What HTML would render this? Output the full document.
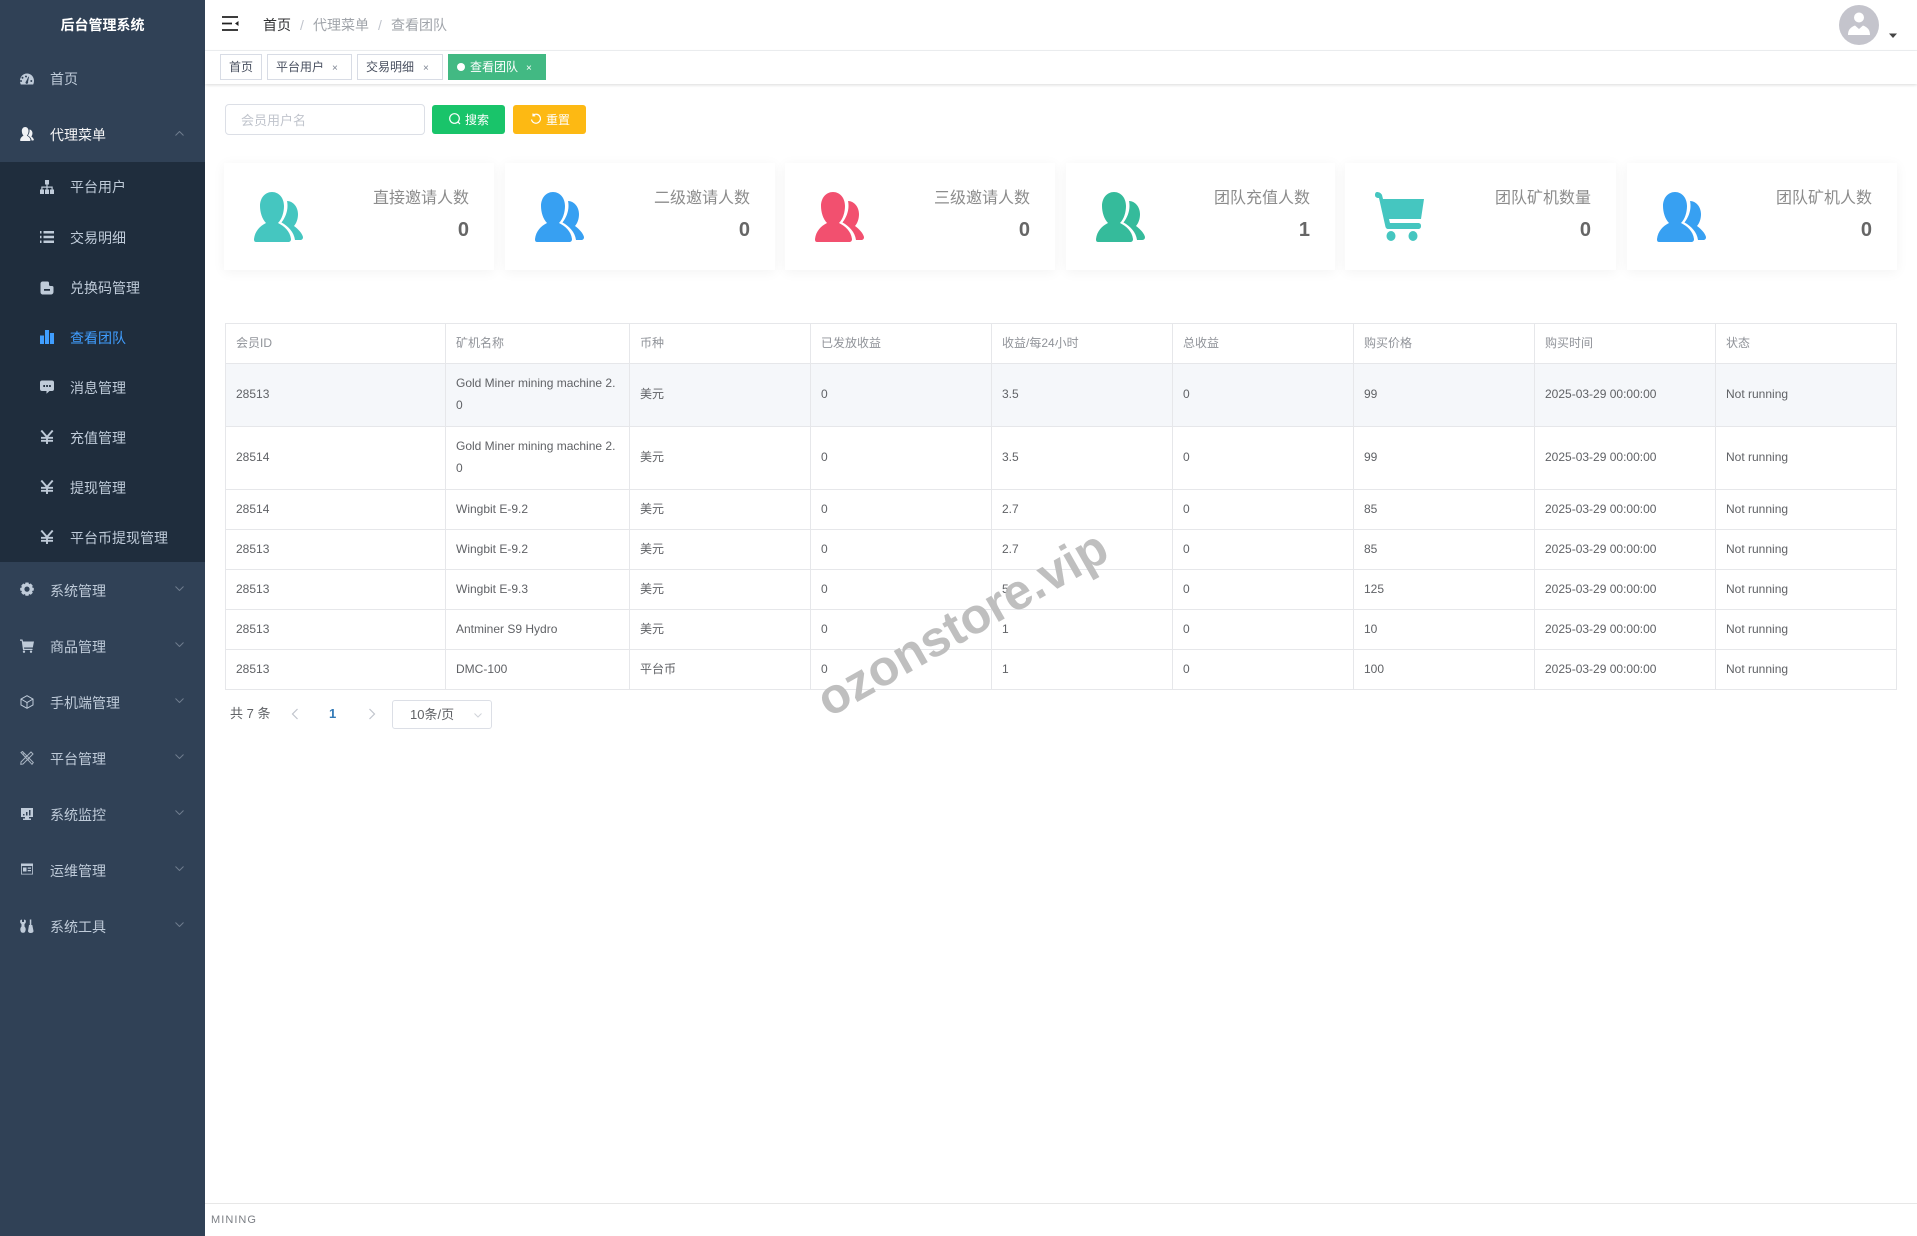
<!DOCTYPE html>
<html lang="zh-CN">
<head>
<meta charset="utf-8">
<title>查看团队</title>
<style>
*{box-sizing:border-box}
html,body{margin:0;padding:0;width:1917px;height:1236px;overflow:hidden;background:#fff;font-family:"Liberation Sans","Noto Sans CJK SC",sans-serif;color:#606266}
#side{position:absolute;left:0;top:0;width:205px;height:1236px;background:#304156}
#sub{position:absolute;left:0;top:162px;width:205px;height:400px;background:#1f2d3d}
.title{position:absolute;left:0;top:15px;width:205px;text-align:center;color:#fff;font-weight:700;font-size:14px;line-height:20px}
.m{position:absolute;left:0;width:205px;height:20px;font-size:14px;line-height:20px;color:#bfcbd9}
.m span{position:absolute;left:50px;top:0;white-space:nowrap}
.m.s span{left:70px}
.m svg.i{position:absolute;left:20px;top:2px;width:14px;height:14px;fill:#bfcbd9}
.m.s svg.i{left:40px}
.m svg.c{position:absolute;left:175px;top:5px;width:9px;height:5px;fill:none;stroke:#6f7d8e;stroke-width:1}
#head{position:absolute;left:205px;top:0;width:1712px;height:51px;background:#fff;border-bottom:1px solid #f0f2f4}
#tags{position:absolute;left:205px;top:51px;width:1712px;height:33px;background:#fff;box-shadow:0 1px 3px rgba(0,0,0,.15)}
.bc{position:absolute;top:15px;font-size:14px;line-height:20px;color:#a0a4aa;white-space:nowrap}
.tag{position:absolute;top:54px;height:26px;border:1px solid #d8dce5;background:#fff;font-size:12px;line-height:25px;color:#495060;white-space:nowrap}
.tag b{position:absolute;top:1px;font-weight:400;font-size:10px;color:#7a8290}
.tag.on{background:#42b983;border-color:#42b983;color:#fff}
.tag.on b{color:#fff}
#ipt{position:absolute;left:225px;top:104px;width:200px;height:31px;border:1px solid #dcdfe6;border-radius:4px;background:#fff;font-size:13px;line-height:31px;color:#c0c4cc;padding-left:15px}
.btn{position:absolute;top:105px;height:29px;width:73px;border-radius:3px;color:#fff;font-size:12px;line-height:29px}
.btn span{position:absolute;left:33px;top:1px}
.btn svg{position:absolute;left:17px;top:8px;width:12px;height:12px;fill:none;stroke:#fff;stroke-width:1.2}
.card{position:absolute;top:163px;height:107px;background:#fff;box-shadow:0 2px 12px rgba(0,0,0,.05)}
.card svg{position:absolute;left:30px;top:29px;width:49px;height:50px}
.card .l{position:absolute;right:25px;top:23px;font-size:16px;line-height:26px;color:#8c8c8c;white-space:nowrap}
.card .v{position:absolute;right:25px;top:55px;font-size:20px;line-height:24px;font-weight:700;color:#666}
table{position:absolute;left:225px;top:323px;width:1671px;table-layout:fixed;border-collapse:collapse;font-size:12px;color:#606266}
td,th{border:1px solid #e6e7ea;padding:0 10px;text-align:left;font-weight:400;line-height:23px;overflow:hidden;vertical-align:middle}
th{color:#909399}
tr.g td{background:#f5f7fa}
tr.w td{padding-bottom:2px;line-height:22px}
.pg{position:absolute;font-size:13px;line-height:20px;white-space:nowrap}
#sel{position:absolute;left:392px;top:700px;width:100px;height:29px;border:1px solid #dcdfe6;border-radius:3px;font-size:13px;line-height:27px;color:#606266;padding-left:17px}
#foot{position:absolute;left:205px;top:1203px;width:1712px;height:33px;background:#fff;border-top:1px solid #e7e7e7}
#foot span{position:absolute;left:6px;top:8px;font-size:11px;line-height:16px;letter-spacing:1.05px;color:#7c7f85}
#wm{position:absolute;left:0;top:0;pointer-events:none}
</style>
</head>
<body>
<svg width="0" height="0" style="position:absolute">
<defs>
<symbol id="ppl" viewBox="0 0 49 50">
<path d="M2 50C0 50 0 48 0 47C1 39 6 34 12 31C8 27 6 20 6 14C6 6 11 0 18 0C25 0 30 6 30 14C30 20 28 27 24 31C30 34 36 39 37 47C37 49 36 50 34 50Z"/>
<path d="M33 9C39 9 44 15 44 22C44 27 42.500 31 40 34C44 37 48 41 49 45C49 47 48 48 46 48L41 48C40 40 34 34 27.500 30.500C31 26 33.500 20 33.500 14C33.500 12 33.300 10 33 9Z"/>
</symbol>
<symbol id="chd" viewBox="0 0 9 5"><path d="M.5.5L4.500 4.500L8.500.5"/></symbol>
<symbol id="chu" viewBox="0 0 9 5"><path d="M.5 4.500L4.500.5L8.500 4.500"/></symbol>
<symbol id="yen" viewBox="0 0 14 14"><path d="M1.300.5L7 7L12.700.5M7 7V14M1 7.800H13M1 10.800H13" fill="none" stroke="#bfcbd9" stroke-width="1.900"/></symbol>
</defs>
</svg>

<div id="side">
<div class="title">后台管理系统</div>
<div class="m" style="top:69px"><svg class="i" viewBox="0 0 14 14" style="top:3px"><path d="M7 1.500C3 1.500 0 4.800 0 8.800C0 10.300.3 11.300.8 12.500L13.200 12.500C13.700 11.300 14 10.300 14 8.800C14 4.800 11 1.500 7 1.500ZM6 9.500L8.500 4.500L9 5L8 10A1.300 1.300 0 1 1 6 9.500ZM2 9A1 1 0 1 1 2 8.900ZM3.500 5.800A1 1 0 1 1 3.500 5.700ZM7 4.500A1 1 0 1 1 7 4.400ZM12.300 9A1 1 0 1 1 12.300 8.900Z" fill-rule="evenodd"/></svg><span>首页</span></div>
<div class="m" style="top:125px"><svg class="i" style="fill:#f0f2f5;top:2px"><use href="#ppl"/></svg><span style="color:#f4f4f5">代理菜单</span><svg class="c" style="top:6px"><use href="#chu"/></svg></div>

<div id="sub"></div>
<div class="m s" style="top:177px"><svg class="i" viewBox="0 0 14 14" style="top:3px"><path d="M5 0H9V4.500H7.600V6.500H12.700V9.500H14V14H10V9.500H11.500V7.700H7.600V9.500H9V14H5V9.500H6.400V7.700H2.500V9.500H4V14H0V9.500H1.300V6.500H6.400V4.500H5Z"/></svg><span>平台用户</span></div>
<div class="m s" style="top:228px"><svg class="i" viewBox="0 0 14 14"><path d="M0 1H1.500V3.500H0ZM3.500 1H14V3.500H3.500ZM0 5.800H1.500V8.300H0ZM3.500 5.800H14V8.300H3.500ZM0 10.500H1.500V13H0ZM3.500 10.500H14V13H3.500Z"/></svg><span>交易明细</span></div>
<div class="m s" style="top:278px"><svg class="i" viewBox="0 0 14 14" style="top:3px"><path d="M2.500.5H7.500C8.500.5 9 1 9 2V3.500C9 4.500 9.500 5 10.500 5H12C13 5 13.500 5.500 13.500 6.500V10.500C13.500 12.500 12.500 13.500 10.500 13.500H3C1.500 13.500.5 12.500.5 11V2.500C.5 1.500 1.500.5 2.500.5ZM4 8V9.800H10V8Z" fill-rule="evenodd"/></svg><span>兑换码管理</span></div>
<div class="m s" style="top:328px"><svg class="i" viewBox="0 0 14 14" style="fill:#409eff;top:2px"><path d="M0 5.500H4V14H0ZM5 0H9V14H5ZM10 3H14V14H10Z"/></svg><span style="color:#409eff">查看团队</span></div>
<div class="m s" style="top:378px"><svg class="i" viewBox="0 0 14 14" style="top:2px"><path d="M2 .5H12C13.300.5 14 1.300 14 2.500V9C14 10.200 13.300 11 12 11H9.500L6.500 13.800V11H2C.8 11 0 10.200 0 9V2.500C0 1.300.8.500 2 .5ZM3.300 5V7H5V5ZM6.200 5V7H7.900V5ZM9.100 5V7H10.800V5Z" fill-rule="evenodd"/></svg><span>消息管理</span></div>
<div class="m s" style="top:428px"><svg class="i" style="top:2px"><use href="#yen"/></svg><span>充值管理</span></div>
<div class="m s" style="top:478px"><svg class="i" style="top:2px"><use href="#yen"/></svg><span>提现管理</span></div>
<div class="m s" style="top:528px"><svg class="i" style="top:2px"><use href="#yen"/></svg><span>平台币提现管理</span></div>

<div class="m" style="top:581px"><svg class="i" viewBox="0 0 14 14" style="top:1px"><path d="M5.500.5H8.500L9 2.300L10.800 1.500L12.800 3.700L12 5.300L13.800 6V8.500L12 9L12.800 10.800L10.800 12.800L9 12L8.500 13.800H5.500L5 12L3.200 12.800L1.200 10.800L2 9L.2 8.500V6L2 5.300L1.200 3.700L3.200 1.500L5 2.300ZM7 4.500A2.600 2.600 0 1 0 7 9.700A2.600 2.600 0 1 0 7 4.500Z" fill-rule="evenodd"/></svg><span>系统管理</span><svg class="c" style="top:5px"><use href="#chd"/></svg></div>
<div class="m" style="top:637px"><svg class="i" viewBox="0 0 14 14" style="top:2px"><path d="M0 .5H2.500L3 2.500H14L12.800 8.500H4L4.200 9.800H12.500V11H3L1.700 1.700H0ZM4 11.500A1.200 1.200 0 1 1 4 13.900A1.200 1.200 0 1 1 4 11.500ZM11 11.500A1.200 1.200 0 1 1 11 13.900A1.200 1.200 0 1 1 11 11.500Z"/></svg><span>商品管理</span><svg class="c"><use href="#chd"/></svg></div>
<div class="m" style="top:693px"><svg class="i" viewBox="0 0 14 14" style="fill:none;stroke:#bfcbd9;stroke-width:1;top:2px"><path d="M7 .7L13 4V10L7 13.300L1 10V4ZM1 4L7 7.500L13 4M7 7.500V13.300"/></svg><span>手机端管理</span><svg class="c"><use href="#chd"/></svg></div>
<div class="m" style="top:749px"><svg class="i" viewBox="0 0 14 14" style="fill:none;stroke:#a9b5c3;stroke-width:1;top:2px"><path d="M1 11L11 1L13 3L3 13L.8 13.300ZM1 1.500L2.500.5L13.300 11.500L12 13.300ZM3 3.500L4.500 2M5.500 6L7 4.500M8 8.500L9.500 7"/></svg><span>平台管理</span><svg class="c"><use href="#chd"/></svg></div>
<div class="m" style="top:805px"><svg class="i" viewBox="0 0 14 14" style="top:2px"><path d="M1 1H13V10H9V11.500H11V13H3V11.500H5V10H1ZM3 7V8.500H4.500V7ZM6 5V8.500H7.500V5ZM9 3V8.500H10.500V3Z" fill-rule="evenodd"/></svg><span>系统监控</span><svg class="c"><use href="#chd"/></svg></div>
<div class="m" style="top:861px"><svg class="i" viewBox="0 0 14 14" style="top:1px"><path d="M1 1.500H13V12.500H1ZM1.800 4V11.700H12.200V4ZM3 5.500H6.500V9.500H3ZM7.700 5.500H11V6.700H7.700ZM7.700 8H11V9.300H7.700Z" fill-rule="evenodd"/></svg><span>运维管理</span><svg class="c"><use href="#chd"/></svg></div>
<div class="m" style="top:917px"><svg class="i" viewBox="0 0 14 14" style="top:2px"><path d="M.5 1L2 .5V3H4V.5L5.500 1C6.200 2.500 6 4 4.500 5V7.500C6 9 6 11 5 13C4 14 2 14 1 13C0 11 0 9 1.500 7.500V5C0 4 -.2 2.500.5 1ZM9.800.5H11.300V6H12.300L13.500 12C13.500 13.500 12 14 10.500 14C9 14 8 13 8 12L9 6H9.800Z"/></svg><span>系统工具</span><svg class="c"><use href="#chd"/></svg></div>
</div>

<div id="head">
<svg style="position:absolute;left:17px;top:16px" width="17" height="15" viewBox="0 0 17 15"><path d="M0 1H16M0 7.500H10M0 14H16" stroke="#222" stroke-width="1.800" fill="none"/><path d="M16.500 5V10L13 7.500Z" fill="#222"/></svg>
<div class="bc" style="left:58px;color:#303133">首页</div>
<div class="bc" style="left:95px;color:#c0c4cc">/</div>
<div class="bc" style="left:108px">代理菜单</div>
<div class="bc" style="left:173px;color:#c0c4cc">/</div>
<div class="bc" style="left:186px">查看团队</div>
<svg style="position:absolute;left:1634px;top:5px" width="40" height="40" viewBox="0 0 40 40"><circle cx="20" cy="20" r="20" fill="#c4c4cc"/><circle cx="20" cy="12.500" r="5" fill="#fff"/><path d="M9 30C9 25 11 22.500 16 20.500L20 24L24 20.500C29 22.500 31 25 31 30Z" fill="#fff"/></svg>
<svg style="position:absolute;left:1684px;top:33px" width="9" height="6" viewBox="0 0 9 6"><path d="M0 .5H8L4 5Z" fill="#444"/></svg>
</div>
<div id="tags"></div>
<div class="tag" style="left:220px;width:42px;padding-left:8px">首页</div>
<div class="tag" style="left:267px;width:85px;padding-left:8px">平台用户<b style="left:64px">×</b></div>
<div class="tag" style="left:357px;width:86px;padding-left:8px">交易明细<b style="left:65px">×</b></div>
<div class="tag on" style="left:448px;width:98px;padding-left:21px"><i style="position:absolute;left:8px;top:8px;width:8px;height:8px;border-radius:50%;background:#fff"></i>查看团队<b style="left:77px">×</b></div>

<div id="ipt">会员用户名</div>
<div class="btn" style="left:432px;background:#19c46a"><svg viewBox="0 0 12 12"><circle cx="5.500" cy="5.500" r="4.800"/><path d="M9 9L11 11"/></svg><span>搜索</span></div>
<div class="btn" style="left:513px;background:#fdb913"><svg viewBox="0 0 12 12"><path d="M3 2.300A4.500 4.500 0 1 1 1.500 6.500M3 .5V2.800H5.300"/></svg><span>重置</span></div>

<div class="card" style="left:224px;width:270px"><svg fill="#45c6c0"><use href="#ppl"/></svg><div class="l">直接邀请人数</div><div class="v">0</div></div>
<div class="card" style="left:505px;width:270px"><svg fill="#37a0f2"><use href="#ppl"/></svg><div class="l">二级邀请人数</div><div class="v">0</div></div>
<div class="card" style="left:785px;width:270px"><svg fill="#f2506f"><use href="#ppl"/></svg><div class="l">三级邀请人数</div><div class="v">0</div></div>
<div class="card" style="left:1066px;width:269px"><svg fill="#35bb9b"><use href="#ppl"/></svg><div class="l">团队充值人数</div><div class="v">1</div></div>
<div class="card" style="left:1345px;width:271px"><svg viewBox="0 0 49 50" fill="#45c6c0"><path d="M2 0C4 0 6 1 7 3L8 7H49L46 27H14L15 31H43C45 31 46 32 46 34C46 36 45 37 43 37H13C11.500 37 11 36 10.500 35L4 6C1.500 6 0 5 0 3C0 1 1 0 2 0Z"/><ellipse cx="16" cy="44" rx="4.500" ry="5"/><ellipse cx="38" cy="44" rx="4.500" ry="5"/></svg><div class="l">团队矿机数量</div><div class="v">0</div></div>
<div class="card" style="left:1627px;width:270px"><svg fill="#37a0f2"><use href="#ppl"/></svg><div class="l">团队矿机人数</div><div class="v">0</div></div>

<table>
<colgroup><col style="width:220px"><col style="width:184px"><col style="width:181px"><col style="width:181px"><col style="width:181px"><col style="width:181px"><col style="width:181px"><col style="width:181px"><col style="width:181px"></colgroup>
<tr style="height:40px"><th>会员ID</th><th>矿机名称</th><th>币种</th><th>已发放收益</th><th>收益/每24小时</th><th>总收益</th><th>购买价格</th><th>购买时间</th><th>状态</th></tr>
<tr class="g w" style="height:63px"><td>28513</td><td>Gold Miner mining machine 2.<br>0</td><td>美元</td><td>0</td><td>3.5</td><td>0</td><td>99</td><td>2025-03-29 00:00:00</td><td>Not running</td></tr>
<tr class="w" style="height:63px"><td>28514</td><td>Gold Miner mining machine 2.<br>0</td><td>美元</td><td>0</td><td>3.5</td><td>0</td><td>99</td><td>2025-03-29 00:00:00</td><td>Not running</td></tr>
<tr style="height:40px"><td>28514</td><td>Wingbit E-9.2</td><td>美元</td><td>0</td><td>2.7</td><td>0</td><td>85</td><td>2025-03-29 00:00:00</td><td>Not running</td></tr>
<tr style="height:40px"><td>28513</td><td>Wingbit E-9.2</td><td>美元</td><td>0</td><td>2.7</td><td>0</td><td>85</td><td>2025-03-29 00:00:00</td><td>Not running</td></tr>
<tr style="height:40px"><td>28513</td><td>Wingbit E-9.3</td><td>美元</td><td>0</td><td>5</td><td>0</td><td>125</td><td>2025-03-29 00:00:00</td><td>Not running</td></tr>
<tr style="height:40px"><td>28513</td><td>Antminer S9 Hydro</td><td>美元</td><td>0</td><td>1</td><td>0</td><td>10</td><td>2025-03-29 00:00:00</td><td>Not running</td></tr>
<tr style="height:40px"><td>28513</td><td>DMC-100</td><td>平台币</td><td>0</td><td>1</td><td>0</td><td>100</td><td>2025-03-29 00:00:00</td><td>Not running</td></tr>
</table>

<div class="pg" style="left:230px;top:704px;color:#606266">共 7 条</div>
<svg style="position:absolute;left:291px;top:708px" width="8" height="12" viewBox="0 0 8 12"><path d="M6.500 1L1.500 6L6.500 11" fill="none" stroke="#c0c4cc" stroke-width="1.200"/></svg>
<div class="pg" style="left:329px;top:704px;color:#337ab7;font-weight:700">1</div>
<svg style="position:absolute;left:368px;top:708px" width="8" height="12" viewBox="0 0 8 12"><path d="M1.500 1L6.500 6L1.500 11" fill="none" stroke="#c0c4cc" stroke-width="1.200"/></svg>
<div id="sel">10条/页<svg style="position:absolute;left:81px;top:12px" width="8" height="5" viewBox="0 0 8 5"><path d="M.5.5L4 4L7.500.5" fill="none" stroke="#d0d3d9"/></svg></div>

<div id="foot"><span>MINING</span></div>

<svg id="wm" width="1917" height="1236"><text transform="translate(829,718) rotate(-29.500)" font-family="Liberation Sans" font-weight="700" font-size="50" fill="#bcbcbc" fill-opacity=".95">ozonstore.vip</text></svg>
</body>
</html>
